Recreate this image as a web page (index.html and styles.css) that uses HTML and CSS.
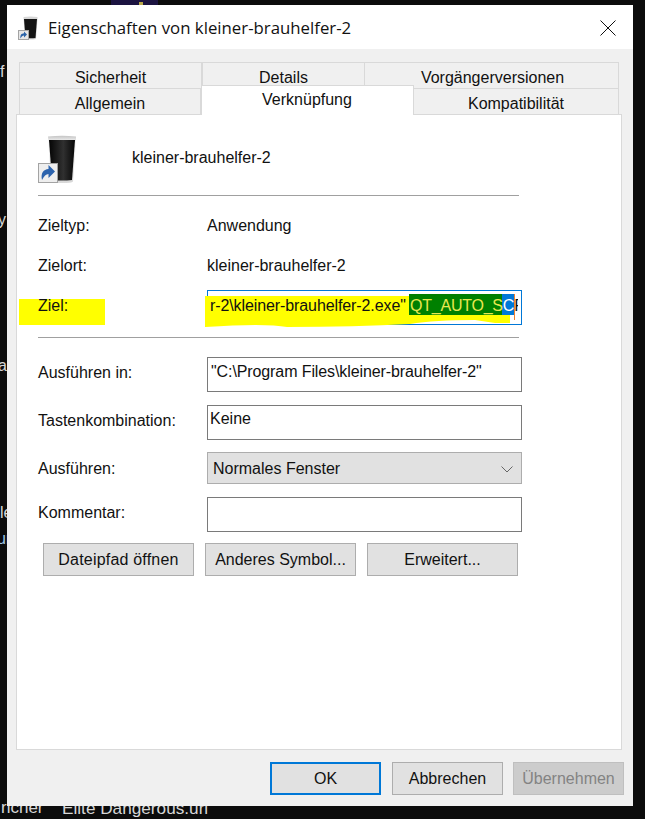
FILE: index.html
```html
<!DOCTYPE html>
<html lang="de">
<head>
<meta charset="utf-8">
<title>Eigenschaften von kleiner-brauhelfer-2</title>
<link rel="stylesheet" href="styles.css">
</head>
<body>
<div class="desktop">
  <div class="wallpaper-art"><i></i></div>
  <span class="dt dt-f">f</span>
  <span class="dt dt-y">y</span>
  <span class="dt dt-a">a</span>
  <span class="dt dt-le">le</span>
  <span class="dt dt-ur">ur</span>
  <span class="dt dt-richer">richer</span>
  <span class="dt dt-elite">Elite Dangerous.url</span>

  <div class="window">
    <header class="titlebar">
      <svg class="title-icon" viewBox="0 0 20 24" width="20" height="24">
        <path d="M5.500 1q7-1 14 0v2l-1.500 20q-5.500 1-11 0z" fill="#d6d6d6"/>
        <path d="M6 3h13l-1.500 19q-4.500 .5-10 0z" fill="#141414"/>
        <rect x="0.500" y="14.500" width="10" height="9" fill="#e6e6e6" stroke="#a3a3a3"/>
        <path d="M2.500 22.500c-.5-3.500 1-5 3.500-5.200V15.500l3 3-3 3v-2c-1.500 0-2.500 1-3.500 3z" fill="#2a62a8"/>
      </svg>
      <span class="title-text">Eigenschaften von kleiner-brauhelfer-2</span>
      <svg class="close" viewBox="0 0 16 16" width="16" height="16"><path d="M0.500 0.500l15 15M15.500 0.500l-15 15" stroke="#111" stroke-width="1" fill="none"/></svg>
    </header>

    <div class="content">
      <div class="tabs">
        <div class="tab-row">
          <div class="tab t-sich">Sicherheit</div>
          <div class="tab t-det">Details</div>
          <div class="tab t-vor">Vorgängerversionen</div>
        </div>
        <div class="tab-row lower">
          <div class="tab t-all">Allgemein</div>
          <div class="tab active t-ver">Verknüpfung</div>
          <div class="tab t-kom">Kompatibilität</div>
        </div>
      </div>

      <section class="panel">
        <div class="head">
          <svg class="big-icon" viewBox="0 0 38 48" width="38" height="48">
            <defs>
              <linearGradient id="beer" x1="0" x2="1" y1="0" y2="0">
                <stop offset="0" stop-color="#040404"/>
                <stop offset="0.55" stop-color="#303030"/>
                <stop offset="1" stop-color="#060606"/>
              </linearGradient>
              <linearGradient id="rim" x1="0" x2="0" y1="0" y2="1">
                <stop offset="0" stop-color="#c4c4c4"/>
                <stop offset="0.12" stop-color="#f4f4f4"/>
                <stop offset="1" stop-color="#d8d8d8"/>
              </linearGradient>
            </defs>
            <path d="M10 1.500q14-1.500 28 0v4l-3 41q-1 1.500-11 1.500t-11-1.500z" fill="url(#rim)"/>
            <path d="M11 5h26l-3 40q-10 1-20 0z" fill="url(#beer)"/>
            <rect x="0.500" y="28.500" width="19" height="19" fill="#eeeeee" stroke="#a3a3a3"/>
            <path d="M4 45c-1.500-7 1.500-10.500 6.500-11V30l6.500 6.500-6.500 6.500v-4c-2.500 0-4.500 2-6.500 6z" fill="#2c63ad"/>
          </svg>
          <span class="app-name">kleiner-brauhelfer-2</span>
        </div>
        <hr class="sep">

        <div class="row r-typ"><span class="lbl">Zieltyp:</span><span class="val">Anwendung</span></div>
        <div class="row r-ort"><span class="lbl">Zielort:</span><span class="val">kleiner-brauhelfer-2</span></div>

        <div class="row r-ziel">
          <span class="lbl marker-host"><i class="marker"></i><b class="lbl-text">Ziel:</b></span>
          <div class="field focus">
            <svg class="scribble" viewBox="0 0 310 32" width="310" height="32">
              <path d="M0 0H305V27L290 27L270 24Q230 24 205 28Q150 31 82 31Q60 27 0 31Z" fill="#ffff00"/>
            </svg>
            <i class="green"></i><i class="sel"></i><i class="caret"></i>
            <span class="target-text">r-2\kleiner-brauhelfer-2.exe" <em>QT_AUTO_S</em><u>C</u>F</span>
          </div>
        </div>
        <hr class="sep sep2">

        <div class="row r-in"><span class="lbl">Ausführen in:</span><div class="field">"C:\Program Files\kleiner-brauhelfer-2"</div></div>
        <div class="row r-key"><span class="lbl">Tastenkombination:</span><div class="field keine">Keine</div></div>
        <div class="row r-run"><span class="lbl">Ausführen:</span>
          <div class="select">Normales Fenster
            <svg viewBox="0 0 12 7" width="12" height="7"><path d="M0.500 0.500L6 6l5.500-5.500" fill="none" stroke="#666"/></svg>
          </div>
        </div>
        <div class="row r-kom"><span class="lbl">Kommentar:</span><div class="field"></div></div>

        <div class="actions">
          <button class="btn wide">Dateipfad öffnen</button>
          <button class="btn">Anderes Symbol...</button>
          <button class="btn">Erweitert...</button>
        </div>
      </section>

      <footer class="footer">
        <button class="btn foot default">OK</button>
        <button class="btn foot plain">Abbrechen</button>
        <button class="btn foot disabled">Übernehmen</button>
      </footer>
    </div>
  </div>
</div>
</body>
</html>
```
FILE: styles.css
```css
* { box-sizing: border-box; }
html, body { margin: 0; padding: 0; height: 100%; }
body { background: #0c0c0c; overflow: hidden; font-family: "Liberation Sans", Arial, sans-serif; font-size: 16px; color: #111; }

.desktop { position: relative; width: 645px; height: 819px; overflow: hidden; }
.wallpaper-art { position: absolute; left: 111px; top: 0; width: 47px; height: 6px; background: #1b1340; }
.wallpaper-art i { position: absolute; left: 28px; top: 2px; width: 4px; height: 3px; background: #b9a84a; }
.dt { position: absolute; color: #d8d8d8; font-size: 16px; line-height: 18px; white-space: nowrap; }
.dt-f { left: 0; top: 63px; }
.dt-y { left: -2px; top: 211px; }
.dt-a { left: -2px; top: 357px; }
.dt-le { left: 0; top: 504px; }
.dt-ur { left: -3px; top: 530px; color: #9fc4e8; }
.dt-richer { left: 1px; top: 799px; font-size: 17px; }
.dt-elite { left: 62px; top: 799px; font-size: 17.2px; }

.window { position: absolute; left: 7px; top: 5px; width: 626px; height: 801px; background: #f0f0f0; display: flex; flex-direction: column; }
.titlebar { height: 44px; background: #fff; display: flex; align-items: center; padding: 0 17px 0 11px; flex: none; }
.title-icon { flex: none; margin-top: 1px; }
.title-text { font-family: "Open Sans", "Noto Sans", sans-serif; font-size: 16.8px; margin-left: 10px; flex: 1; color: #111; white-space: nowrap; }
.close { flex: none; margin-top: 1px; }

.content { flex: 1; display: flex; flex-direction: column; padding: 13px 11px 11px 9px; }
.tabs { padding-left: 3px; flex: none; }
.tab-row { display: flex; height: 26px; align-items: flex-end; }
.tab { height: 26px; display: flex; align-items: center; justify-content: center; border: 1px solid #d9d9d9; border-bottom: 0; background: #f0f0f0; padding-top: 4px; font-size: 16px; }
.t-sich { width: 183px; }
.t-det { width: 163px; }
.t-vor { width: 255px; margin-left: -1px; padding-left: 2px; }
.t-all { width: 182px; padding-top: 5px; }
.t-ver { width: 213px; padding-right: 1px; }
.t-kom { width: 206px; margin-left: -1px; padding-top: 5px; }
.tab.active { height: 30px; background: #fff; position: relative; z-index: 2; margin-bottom: -1px; padding-top: 0; padding-bottom: 1px; }

.panel { height: 636px; width: 606px; background: #fff; border: 1px solid #d9d9d9; padding: 0 0 0 21px; flex: none; position: relative; }
.head { height: 80px; display: flex; align-items: flex-start; }
.big-icon { margin-top: 20px; flex: none; }
.app-name { margin-left: 56px; margin-top: 34px; line-height: 18px; }
.sep { width: 481px; height: 1px; border: 0; margin: 0; background: #a0a0a0; }
.sep2 { margin-top: 12px; }

.row { display: grid; grid-template-columns: 169px 315px; align-items: center; }
.lbl { line-height: 18px; }
.val { line-height: 18px; }
.r-typ { height: 40px; margin-top: 10px; }
.r-ort { height: 40px; }
.r-ziel { height: 35px; margin-top: 4px; }
.r-in { height: 35px; margin-top: 19px; }
.r-key { height: 35px; margin-top: 13px; }
.r-run { height: 32px; margin-top: 12px; }
.r-kom { height: 35px; margin-top: 13px; }
.r-ziel .lbl, .r-in .lbl, .r-key .lbl, .r-kom .lbl { padding-bottom: 4px; }
.r-run .lbl { padding-top: 2px; }
.r-in .field { letter-spacing: -0.1px; }

.marker-host { position: relative; display: block; }
.marker { position: absolute; left: -19px; top: 2px; width: 86px; height: 26px; background: #ffff00; }
.lbl-text { position: relative; font-weight: 400; }

.field { height: 100%; border: 1px solid #7a7a7a; background: #fff; padding: 0 3px; line-height: 28px; white-space: nowrap; overflow: hidden; position: relative; }
.keine { line-height: 26px; padding-left: 2px; }
.field.focus { border-color: #0078d7; overflow: visible; background: none; }
.scribble { position: absolute; left: -3px; top: 5px; }
.green { position: absolute; left: 201px; top: 3px; width: 93px; height: 21px; background: #008000; }
.sel { position: absolute; left: 294px; top: 3px; width: 12px; height: 21px; background: #0078d7; }
.caret { position: absolute; left: 306px; top: 3px; width: 1px; height: 26px; background: #f08030; }
.target-text { position: absolute; left: 2px; top: 0; width: 308px; overflow: hidden; line-height: 29px; color: #111; letter-spacing: -0.1px; }
.target-text em { font-style: normal; color: #e8e850; letter-spacing: -0.25px; }
.target-text u { text-decoration: none; color: #fff; }

.select { height: 100%; background: #e1e1e1; border: 1px solid #adadad; display: flex; align-items: center; justify-content: space-between; padding: 2px 8px 0 5px; }

.actions { display: flex; margin-top: 11px; margin-left: 5px; }
.btn { font-family: "Liberation Sans", Arial, sans-serif; font-size: 16px; color: #111; height: 33px; background: #e1e1e1; border: 1px solid #adadad; padding: 0; }
.actions .btn { width: 151px; margin-right: 11px; }
.actions .btn:last-child { margin-right: 0; }
.wide { letter-spacing: 0.2px; }

.footer { display: flex; justify-content: flex-end; gap: 11px; margin-top: 12px; margin-right: -2px; }
.foot { width: 111px; }
.default { border: 2px solid #0078d7; }
.plain { background: #e1e1e1; margin-right: -1px; }
.disabled { background: #cccccc; border-color: #bfbfbf; color: #838383; }
```
